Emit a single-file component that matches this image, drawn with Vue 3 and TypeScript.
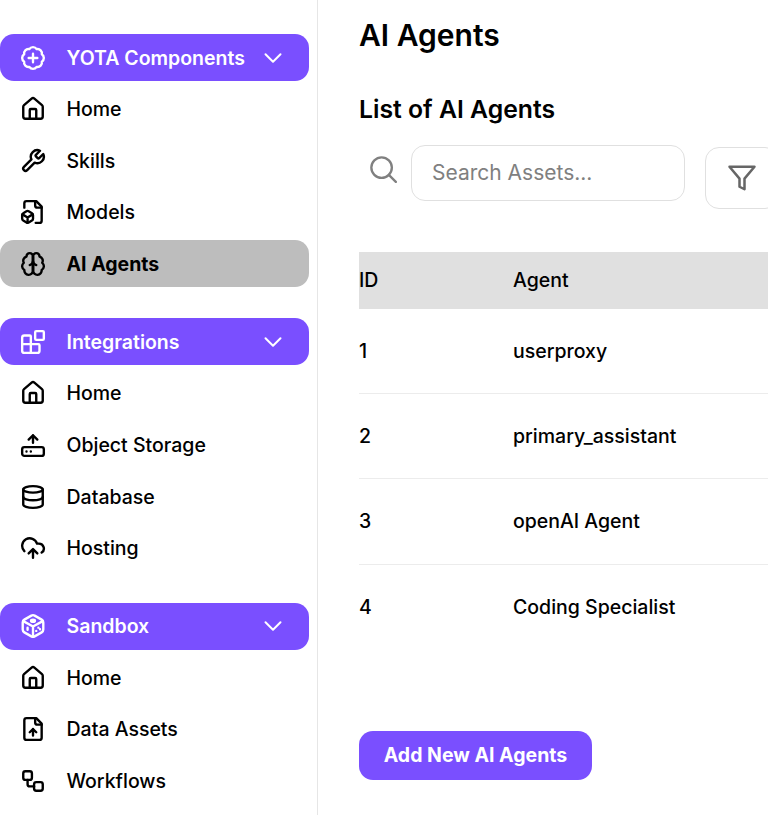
<script setup lang="ts">
interface NavItem { label: string; icon: string; active?: boolean }
interface NavGroup { label: string; icon: string; items: NavItem[] }

const groups: NavGroup[] = [
  {
    label: 'YOTA Components',
    icon: 'badge',
    items: [
      { label: 'Home', icon: 'home' },
      { label: 'Skills', icon: 'wrench' },
      { label: 'Models', icon: 'filebox' },
      { label: 'AI Agents', icon: 'brain', active: true },
    ],
  },
  {
    label: 'Integrations',
    icon: 'blocks',
    items: [
      { label: 'Home', icon: 'home' },
      { label: 'Object Storage', icon: 'router' },
      { label: 'Database', icon: 'database' },
      { label: 'Hosting', icon: 'cloud' },
    ],
  },
  {
    label: 'Sandbox',
    icon: 'dice',
    items: [
      { label: 'Home', icon: 'home' },
      { label: 'Data Assets', icon: 'fileup' },
      { label: 'Workflows', icon: 'workflow' },
    ],
  },
]

const agents = [
  { id: 1, name: 'userproxy' },
  { id: 2, name: 'primary_assistant' },
  { id: 3, name: 'openAI Agent' },
  { id: 4, name: 'Coding Specialist' },
]
</script>

<template>
  <div class="page">
    <svg class="defs" width="0" height="0" aria-hidden="true">
      <defs>
        <symbol id="i-badge" viewBox="0 0 24 24">
          <path d="M3.85 8.62a4 4 0 0 1 4.78-4.77 4 4 0 0 1 6.74 0 4 4 0 0 1 4.78 4.78 4 4 0 0 1 0 6.74 4 4 0 0 1-4.77 4.78 4 4 0 0 1-6.75 0 4 4 0 0 1-4.78-4.77 4 4 0 0 1 0-6.76Z" />
          <path d="M12 8v8M8 12h8" />
        </symbol>
        <symbol id="i-home" viewBox="0 0 24 24">
          <path d="M15 21v-8a1 1 0 0 0-1-1h-4a1 1 0 0 0-1 1v8" />
          <path d="M3 10a2 2 0 0 1 .709-1.528l7-5.999a2 2 0 0 1 2.582 0l7 5.999A2 2 0 0 1 21 10v9a2 2 0 0 1-2 2H5a2 2 0 0 1-2-2z" />
        </symbol>
        <symbol id="i-wrench" viewBox="0 0 24 24">
          <path d="M14.7 6.3a1 1 0 0 0 0 1.4l1.6 1.6a1 1 0 0 0 1.4 0l3.77-3.77a6 6 0 0 1-7.94 7.94l-6.91 6.91a2.12 2.12 0 0 1-3-3l6.91-6.91a6 6 0 0 1 7.94-7.94l-3.76 3.76z" />
        </symbol>
        <symbol id="i-filebox" viewBox="0 0 24 24">
          <path d="M14.5 22H18a2 2 0 0 0 2-2V7l-5-5H6a2 2 0 0 0-2 2v4" />
          <path d="M14 2v4a2 2 0 0 0 2 2h4" />
          <path d="M3 13.1a2 2 0 0 0-1 1.76v3.24a2 2 0 0 0 .97 1.78L6 21.7a2 2 0 0 0 2.03.01L11 19.9a2 2 0 0 0 1-1.76V14.9a2 2 0 0 0-.97-1.78L8 11.3a2 2 0 0 0-2.03-.01Z" />
          <path d="M7 17v5M11.7 14.2 7 17l-4.7-2.8" />
        </symbol>
        <symbol id="i-brain" viewBox="0 0 24 24">
          <path d="M12 5a3 3 0 1 0-5.997.125 4 4 0 0 0-2.526 5.77 4 4 0 0 0 .556 6.588A4 4 0 1 0 12 18Z" />
          <path d="M12 5a3 3 0 1 1 5.997.125 4 4 0 0 1 2.526 5.77 4 4 0 0 1-.556 6.588A4 4 0 1 1 12 18Z" />
          <path d="M12 5v15M15 13a4.5 4.5 0 0 1-3-4 4.5 4.5 0 0 1-3 4" />
        </symbol>
        <symbol id="i-blocks" viewBox="0 0 24 24">
          <path d="M10 22V7a1 1 0 0 0-1-1H4a2 2 0 0 0-2 2v12a2 2 0 0 0 2 2h12a2 2 0 0 0 2-2v-5a1 1 0 0 0-1-1H2" />
          <rect x="14" y="2" width="8" height="8" rx="1" />
        </symbol>
        <symbol id="i-router" viewBox="0 0 24 24">
          <rect x="2" y="14" width="20" height="8" rx="2" />
          <path d="M6 18h.01M10 18h.01M12 10V3M8 7l4-4 4 4" />
        </symbol>
        <symbol id="i-database" viewBox="0 0 24 24">
          <ellipse cx="12" cy="5" rx="9" ry="3" />
          <path d="M3 5v14a9 3 0 0 0 18 0V5" />
          <path d="M3 12a9 3 0 0 0 18 0" />
        </symbol>
        <symbol id="i-cloud" viewBox="0 0 24 24">
          <path d="M12 13v8M8 17l4-4 4 4" />
          <path d="M4 14.899A7 7 0 1 1 15.71 8h1.79a4.5 4.5 0 0 1 2.5 8.242" />
        </symbol>
        <symbol id="i-dice" viewBox="0 0 24 24">
          <path d="M10.5 2.400a3 3 0 0 1 3 0l6.500 3.700a3 3 0 0 1 1.500 2.600v6.600a3 3 0 0 1-1.500 2.600l-6.500 3.700a3 3 0 0 1-3 0L4 17.900a3 3 0 0 1-1.500-2.600V8.700a3 3 0 0 1 1.500-2.600Z" />
          <path d="M3 7.500l9 5 9-5M12 12.500V22" />
          <ellipse cx="12" cy="7.200" rx="1.800" ry="1" />
          <path d="M7 13.500v2M17 13.500v.01M15 16.500v.01M18.500 15v.01" />
        </symbol>
        <symbol id="i-fileup" viewBox="0 0 24 24">
          <path d="M15 2H6a2 2 0 0 0-2 2v16a2 2 0 0 0 2 2h12a2 2 0 0 0 2-2V7Z" />
          <path d="M14 2v4a2 2 0 0 0 2 2h4" />
          <path d="M12 18v-6M15 15l-3-3-3 3" />
        </symbol>
        <symbol id="i-workflow" viewBox="0 0 24 24">
          <rect x="3" y="3" width="8" height="8" rx="2" />
          <path d="M7 11v4a2 2 0 0 0 2 2h4" />
          <rect x="13" y="13" width="8" height="8" rx="2" />
        </symbol>
      </defs>
    </svg>

    <aside class="sidebar">
      <section v-for="group in groups" :key="group.label" class="group">
        <div class="row head">
          <svg class="icon"><use :href="`#i-${group.icon}`" /></svg>
          <span class="label">{{ group.label }}</span>
          <svg class="chev" viewBox="0 0 24 24"><path d="m3 7.500 9 9 9-9" /></svg>
        </div>
        <div v-for="item in group.items" :key="item.label" class="row" :class="{ active: item.active }">
          <svg class="icon"><use :href="`#i-${item.icon}`" /></svg>
          <span class="label">{{ item.label }}</span>
        </div>
      </section>
    </aside>

    <main class="main">
      <h1 class="title">AI Agents</h1>
      <h2 class="subtitle">List of AI Agents</h2>

      <div class="tools">
        <svg class="search-icon" viewBox="0 0 24 24">
          <circle cx="10.800" cy="10.800" r="8.800" />
          <path d="m23 23-6-6" />
        </svg>
        <input class="search" type="text" placeholder="Search Assets..." />
        <button class="filter" type="button" aria-label="Filter">
          <svg viewBox="0 0 24 24"><path d="M22 3H2l8 9.460V19l4 2v-8.540L22 3z" /></svg>
        </button>
      </div>

      <div class="table">
        <div class="tr th"><span class="col-id">ID</span><span>Agent</span></div>
        <div v-for="agent in agents" :key="agent.id" class="tr">
          <span class="col-id">{{ agent.id }}</span><span>{{ agent.name }}</span>
        </div>
      </div>

      <button class="add" type="button">Add New AI Agents</button>
    </main>
  </div>
</template>

<style>
html, body { margin: 0; height: 100%; overflow: hidden; background: #fff; }
</style>

<style scoped>
.page {
  display: flex;
  width: 768px;
  height: 815px;
  overflow: hidden;
  font-family: Inter, "Liberation Sans", sans-serif;
  color: #000;
}
.defs { position: absolute; }
.sidebar {
  box-sizing: border-box;
  flex: none;
  width: 318px;
  padding: 34px 8px 0 0;
  border-right: 1px solid #e6e6e6;
  display: flex;
  flex-direction: column;
  gap: 31px;
}
.group { display: flex; flex-direction: column; gap: 4.600px; }
.row {
  height: 47px;
  flex: none;
  display: flex;
  align-items: center;
  padding: 0 24px 0 20px;
  border-radius: 14px;
  font-size: 19.500px;
  font-weight: 500;
}
.icon {
  flex: none;
  width: 26px;
  height: 26px;
  margin-right: 20.500px;
  fill: none;
  stroke: currentColor;
  stroke-width: 2.200;
  stroke-linecap: round;
  stroke-linejoin: round;
}
.label { flex: 1; }
.head { background: #7a4fff; color: #fff; font-weight: 600; }
.active { background: #bdbdbd; font-weight: 700; }
.chev {
  width: 20px;
  height: 20px;
  margin-right: 2px;
  fill: none;
  stroke: #fff;
  stroke-width: 2.400;
  stroke-linecap: round;
  stroke-linejoin: round;
}
.main { flex: 1; min-width: 0; padding-left: 41px; }
.title {
  margin: 0;
  padding-top: 16px;
  font-size: 30px;
  line-height: 38px;
  font-weight: 600;
}
.subtitle {
  margin: 0;
  padding-top: 41px;
  font-size: 24.750px;
  line-height: 29px;
  font-weight: 600;
}
.tools { display: flex; align-items: flex-start; margin-top: 21px; padding-left: 10px; }
.search-icon {
  flex: none;
  width: 28px;
  height: 28px;
  margin: 10px 14px 0 0;
  fill: none;
  stroke: #808080;
  stroke-width: 2;
  stroke-linecap: round;
}
.search {
  box-sizing: border-box;
  width: 274px;
  height: 56px;
  padding: 0 20px 2px;
  border: 1px solid #e0e0e0;
  border-radius: 14px;
  font: 400 21px Inter, "Liberation Sans", sans-serif;
  color: #000;
  outline: none;
}
.search::placeholder { color: #808080; opacity: 1; }
.filter {
  flex: none;
  box-sizing: border-box;
  width: 74px;
  height: 62px;
  margin: 2px 0 0 20px;
  padding: 0 0 0 21px;
  border: 1px solid #e0e0e0;
  border-radius: 14px;
  background: #fff;
  display: flex;
  align-items: center;
}
.filter svg {
  width: 30px;
  height: 30px;
  fill: none;
  stroke: #666;
  stroke-width: 2;
  stroke-linejoin: round;
}
.table { margin-top: 43px; width: 500px; font-size: 19.500px; font-weight: 500; }
.tr {
  display: flex;
  align-items: center;
  height: 85.400px;
  box-sizing: border-box;
  border-bottom: 1px solid #ececec;
}
.tr:last-child { border-bottom: 0; }
.th { height: 56.500px; background: #e0e0e0; border-bottom: 0; }
.col-id { flex: none; width: 154px; }
.add {
  display: block;
  margin-top: 80.500px;
  width: 233px;
  height: 49px;
  border: 0;
  border-radius: 14px;
  background: #7a4fff;
  color: #fff;
  font: 700 19.500px Inter, "Liberation Sans", sans-serif;
}
</style>
